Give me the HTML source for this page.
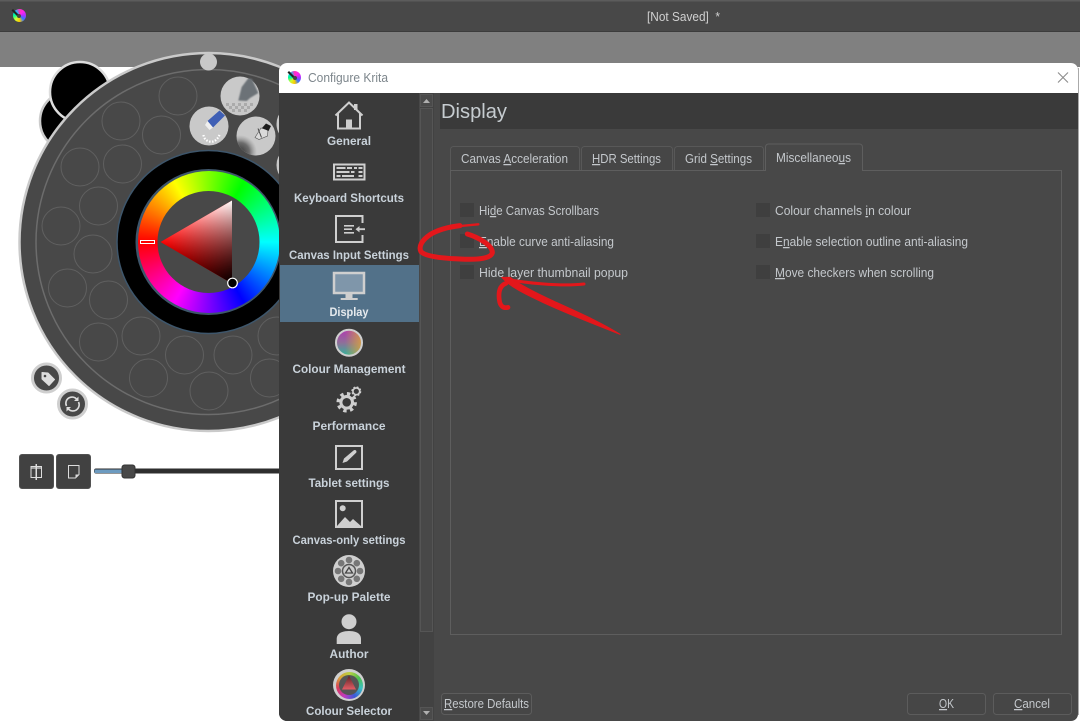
<!DOCTYPE html>
<html><head><meta charset="utf-8"><style>
html,body{margin:0;padding:0;width:1080px;height:724px;overflow:hidden;background:#fff}
.l{position:absolute;left:0;top:0}
.c{position:absolute;border-radius:50%}
text{font-family:"Liberation Sans",sans-serif;font-size:12.5px}
.n text{font-weight:bold;fill:#c9d2da;font-size:12px;text-anchor:middle}
.t text{fill:#c4c8cc}
.u{text-decoration:underline}
</style></head><body>
<svg class="l" width="1080" height="724" viewBox="0 0 1080 724">
<defs>
<radialGradient id="sm" gradientUnits="userSpaceOnUse" cx="240" cy="152" r="17"><stop offset="0" stop-color="#333"/><stop offset=".55" stop-color="#555" stop-opacity=".8"/><stop offset="1" stop-color="#888" stop-opacity="0"/></radialGradient>
<filter id="bl"><feGaussianBlur stdDeviation=".8"/></filter>
<clipPath id="pc"><circle cx="256" cy="136" r="19.500"/></clipPath>
</defs>
<rect width="1080" height="724" fill="#fff"/>
<rect width="1080" height="67" fill="#808080"/>
<rect width="1080" height="32" fill="#484848"/>
<rect width="1080" height="1.5" fill="#5c5c5c"/>
<rect y="31" width="1080" height="1" fill="#3c3c3c"/>
<text x="647" y="21" fill="#d0d0d0" textLength="73" lengthAdjust="spacingAndGlyphs" xml:space="preserve">[Not Saved]  *</text>
<circle cx="70" cy="121" r="30" fill="#000" stroke="#ccc" stroke-width="2.5"/>
<circle cx="80" cy="92" r="30" fill="#000" stroke="#ddd" stroke-width="2.5"/>
<circle cx="208.500" cy="242" r="189" fill="#484848" stroke="#cacaca" stroke-width="2.500"/>
<circle cx="208.500" cy="242" r="172.500" fill="none" stroke="#6c6c6c" stroke-width="1.500"/>
<circle cx="208.500" cy="62" r="8.500" fill="#c8c8c8"/>
<g fill="none" stroke="#606060" stroke-width="1">
<circle cx="178" cy="96" r="19"/><circle cx="121" cy="121" r="19"/><circle cx="161.500" cy="135" r="19"/><circle cx="80" cy="167" r="19"/><circle cx="122.500" cy="164" r="19"/><circle cx="98.500" cy="206" r="19"/><circle cx="61" cy="226" r="19"/><circle cx="93" cy="254" r="19"/><circle cx="67.500" cy="288" r="19"/><circle cx="108.500" cy="300" r="19"/><circle cx="98.500" cy="342" r="19"/><circle cx="141" cy="336" r="19"/><circle cx="148.500" cy="378" r="19"/><circle cx="184.500" cy="355" r="19"/><circle cx="209" cy="391" r="19"/><circle cx="233" cy="355" r="19"/><circle cx="269.500" cy="378" r="19"/><circle cx="277" cy="336" r="19"/>
</g>
<g fill="#c9c9c9">
<circle cx="240" cy="96" r="19.500"/><circle cx="209" cy="126" r="19.500"/><circle cx="256" cy="136" r="19.500"/><circle cx="296" cy="124" r="19.500"/><circle cx="296" cy="165" r="19.500"/>
</g>
<!-- smudge brush -->
<path d="M238.300 100.500L241.700 87 248.300 78.300 252 79 258.300 93 250 98 246.700 101z" fill="#6c7277" filter="url(#bl)"/>
<g fill="#ababab"><rect x="226" y="103" width="3" height="3"/><rect x="232" y="103" width="3" height="3"/><rect x="238" y="103" width="3" height="3"/><rect x="244" y="103" width="3" height="3"/><rect x="250" y="103" width="3" height="3"/><rect x="229" y="106" width="3" height="3"/><rect x="235" y="106" width="3" height="3"/><rect x="241" y="106" width="3" height="3"/><rect x="247" y="106" width="3" height="3"/><rect x="232" y="109" width="3" height="3"/><rect x="238" y="109" width="3" height="3"/><rect x="244" y="109" width="3" height="3"/></g>
<!-- eraser -->
<path d="M207.500 121L219.500 110.500 225 115.500 213 127.500z" fill="#3f5fb5"/>
<path d="M205 125L207.500 121 213 127.500 209.500 130z" fill="#efefef"/>
<path d="M203.500 135C204 140 209 142.500 213 141.500 216 141 219 137 220 133.500" fill="none" stroke="#fff" stroke-width="2.200" stroke-dasharray="1.500 1.500"/>
<!-- pen brush -->
<g clip-path="url(#pc)"><circle cx="240" cy="152" r="17" fill="url(#sm)"/></g>
<path d="M255 137.500L261 128 268 130 267.500 136 259 139.500z" fill="#dadada" stroke="#555" stroke-width=".6"/>
<path d="M262 128L266 123.500 271 126 268.500 131z" fill="#1c1c1c"/>
<path d="M258 128.500l3.500 9" stroke="#444" stroke-width="1"/>
<!-- wheel black -->
<circle cx="208.500" cy="242" r="91.500" fill="#000" stroke="#3e566b" stroke-width="1.500"/>
<circle cx="208.500" cy="242" r="73" fill="#3e566b"/>
<!-- tag buttons -->
<circle cx="46.500" cy="378" r="14" fill="#484848" stroke="#cfcfcf" stroke-width="3"/>
<circle cx="72.500" cy="404" r="14" fill="#484848" stroke="#cfcfcf" stroke-width="3"/>
<path d="M42 372.500l6 .5 6.500 6.500-5.500 6-7-6.500z" fill="#ddd" stroke="#ddd" stroke-linejoin="round"/>
<circle cx="45" cy="376" r="1.300" fill="#484848"/>
<path d="M66.500 406a6.200 6.200 0 0 1 10.500-6.500M78.500 402a6.200 6.200 0 0 1-10.500 6.500" fill="none" stroke="#ddd" stroke-width="1.600"/>
<path d="M78.500 396.500v4.500h-4.500zM66.500 411.500v-4.500h4.500z" fill="#ddd"/>
<!-- toolbar buttons -->
<rect x="19.500" y="454.500" width="34" height="34" rx="2.500" fill="#414141" stroke="#525252"/>
<rect x="56.500" y="454.500" width="34" height="34" rx="2.500" fill="#414141" stroke="#525252"/>
<path d="M31 466.500h5v11h-5zM36.500 466.500h5v11h-5z" fill="none" stroke="#ddd"/>
<rect x="31" y="466.500" width="10.500" height="2.500" fill="#ddd" opacity=".6"/>
<rect x="35.500" y="464" width="1.500" height="16" fill="#ddd"/>
<path d="M68.500 465.500h10.500v9l-3.500 3.500h-7z" fill="none" stroke="#ddd"/>
<path d="M75.500 478v-3.500h3.500z" fill="#ddd"/>
<rect x="94" y="468.500" width="190" height="5" rx="2" fill="#2e2e2e"/>
<rect x="94.500" y="469.500" width="30" height="3.500" fill="#6d9bc0"/>
<rect x="122" y="465" width="13" height="13" rx="2.500" fill="#484848" stroke="#333"/>
</svg>
<div class="c" style="left:137.500px;top:171px;width:142px;height:142px;background:conic-gradient(from 270deg,#f00,#ff0,#0f0,#0ff,#00f,#f0f,#f00)"></div>
<svg class="l" width="1080" height="724" viewBox="0 0 1080 724">
<defs>
<linearGradient id="g2" gradientUnits="userSpaceOnUse" x1="232" y1="200.500" x2="196" y2="263"><stop offset="0" stop-color="#fff"/><stop offset="1" stop-color="#fff" stop-opacity="0"/></linearGradient>
<linearGradient id="g3" gradientUnits="userSpaceOnUse" x1="232" y1="283.500" x2="196" y2="221"><stop offset="0" stop-color="#000"/><stop offset="1" stop-color="#000" stop-opacity="0"/></linearGradient>
<linearGradient id="cm" x1="0" y1="0" x2="0" y2="1"><stop offset="0" stop-color="#b13bb0"/><stop offset=".5" stop-color="#8f6f9a"/><stop offset="1" stop-color="#2fb59a"/></linearGradient>
<linearGradient id="cm2" x1="0" y1="0" x2="1" y2="0"><stop offset=".35" stop-color="#d8a040" stop-opacity="0"/><stop offset="1" stop-color="#d8a040" stop-opacity=".9"/></linearGradient>
<linearGradient id="ct" x1="0" y1="0" x2="0" y2="1"><stop offset="0" stop-color="#5a2424"/><stop offset="1" stop-color="#e55d66"/></linearGradient>
</defs>
<circle cx="208.500" cy="242" r="51" fill="#484848"/>
<path d="M160.500 242L232 200.500V283.500z" fill="#f00"/>
<path d="M160.500 242L232 200.500V283.500z" fill="url(#g2)"/>
<path d="M160.500 242L232 200.500V283.500z" fill="url(#g3)"/>
<rect x="140.500" y="240.500" width="14" height="3" fill="#f00" stroke="#fff"/>
<circle cx="232.500" cy="283" r="4.800" fill="#000" stroke="#fff" stroke-width="1.200"/>

<!-- dialog -->
<path d="M279 71a8 8 0 0 1 8-8h784a7 7 0 0 1 7 7v644a7 7 0 0 1-7 7H287a8 8 0 0 1-8-8z" fill="#484848"/>
<path d="M279 93V71a8 8 0 0 1 8-8h784a7 7 0 0 1 7 7v23z" fill="#fff"/>
<path d="M1078.500 68v647" stroke="#aaa" stroke-width="1"/>
<text x="308" y="82" fill="#7d868c" textLength="80" lengthAdjust="spacingAndGlyphs">Configure Krita</text>
<path d="M1058 72.500l10 10M1068 72.500l-10 10" stroke="#8c8c8c" stroke-width="1.100"/>
<path d="M279 93h141v628H287a8 8 0 0 1-8-8z" fill="#3a3a3a"/>
<rect x="280" y="265" width="139" height="57" fill="#527189"/>
<rect x="419" y="93" width="1" height="628" fill="#484848"/>
<!-- scrollbar -->
<rect x="420" y="93" width="14" height="628" fill="#424242"/>
<rect x="420.500" y="94.500" width="12" height="12" fill="#4a4a4a" stroke="#555"/>
<path d="M423 103l3.500-4 3.500 4z" fill="#b0b0b0"/>
<rect x="420.500" y="108.500" width="12" height="523" fill="#484848" stroke="#555"/>
<rect x="420.500" y="707.500" width="12" height="12" fill="#4a4a4a" stroke="#555"/>
<path d="M423 711l3.500 4 3.500-4z" fill="#b0b0b0"/>
<!-- header -->
<rect x="440" y="93" width="638" height="36" fill="#3a3a3a"/>
<text x="441" y="118" fill="#c6ccd0" style="font-size:20px" textLength="66" lengthAdjust="spacingAndGlyphs">Display</text>
<!-- tabs -->
<path d="M450.500 170.500v-21a3 3 0 0 1 3-3h123a3 3 0 0 1 3 3v21M581.500 170.500v-21a3 3 0 0 1 3-3h85a3 3 0 0 1 3 3v21M674.500 170.500v-21a3 3 0 0 1 3-3h83a3 3 0 0 1 3 3v21" fill="#464646" stroke="#585858"/>
<rect x="450.500" y="170.500" width="611" height="464" fill="#484848" stroke="#5e5e5e"/>
<path d="M765.500 171v-24a3 3 0 0 1 3-3h91a3 3 0 0 1 3 3v24" fill="#484848" stroke="#5e5e5e"/>
<rect x="766" y="169" width="96" height="3" fill="#484848"/>
<g class="t">
<text x="461" y="163" textLength="107" lengthAdjust="spacingAndGlyphs">Canvas <tspan class="u">A</tspan>cceleration</text>
<text x="592" y="163" textLength="69" lengthAdjust="spacingAndGlyphs"><tspan class="u">H</tspan>DR Settings</text>
<text x="685" y="163" textLength="67" lengthAdjust="spacingAndGlyphs">Grid <tspan class="u">S</tspan>ettings</text>
<text x="776" y="162" textLength="75" lengthAdjust="spacingAndGlyphs">Miscellaneo<tspan class="u">u</tspan>s</text>
<text x="479" y="215" textLength="120" lengthAdjust="spacingAndGlyphs">Hi<tspan class="u">d</tspan>e Canvas Scrollbars</text>
<text x="479" y="246" textLength="135" lengthAdjust="spacingAndGlyphs"><tspan class="u">E</tspan>nable curve anti-aliasing</text>
<text x="479" y="277" textLength="149" lengthAdjust="spacingAndGlyphs">Hide layer thumbnail popup</text>
<text x="775" y="215" textLength="136" lengthAdjust="spacingAndGlyphs">Colour channels <tspan class="u">i</tspan>n colour</text>
<text x="775" y="246" textLength="193" lengthAdjust="spacingAndGlyphs">E<tspan class="u">n</tspan>able selection outline anti-aliasing</text>
<text x="775" y="277" textLength="159" lengthAdjust="spacingAndGlyphs"><tspan class="u">M</tspan>ove checkers when scrolling</text>
</g>
<g fill="#3f3f3f">
<rect x="460" y="203" width="14" height="14"/><rect x="460" y="234" width="14" height="14"/><rect x="460" y="265" width="14" height="14"/>
<rect x="756" y="203" width="14" height="14"/><rect x="756" y="234" width="14" height="14"/><rect x="756" y="265" width="14" height="14"/>
</g>
<!-- buttons -->
<g fill="#464646" stroke="#5c5c5c">
<rect x="441.500" y="693.500" width="90" height="21" rx="3"/>
<rect x="907.500" y="693.500" width="78" height="21" rx="3"/>
<rect x="993.500" y="693.500" width="78" height="21" rx="3"/>
</g>
<g class="t">
<text x="444" y="708" textLength="85" lengthAdjust="spacingAndGlyphs"><tspan class="u">R</tspan>estore Defaults</text>
<text x="939" y="708" textLength="15" lengthAdjust="spacingAndGlyphs"><tspan class="u">O</tspan>K</text>
<text x="1014" y="708" textLength="36" lengthAdjust="spacingAndGlyphs"><tspan class="u">C</tspan>ancel</text>
</g>
<!-- sidebar labels -->
<g class="n">
<text x="349" y="145" textLength="44" lengthAdjust="spacingAndGlyphs">General</text>
<text x="349" y="202" textLength="110" lengthAdjust="spacingAndGlyphs">Keyboard Shortcuts</text>
<text x="349" y="259" textLength="120" lengthAdjust="spacingAndGlyphs">Canvas Input Settings</text>
<text x="349" y="316" textLength="39" lengthAdjust="spacingAndGlyphs" style="fill:#e6eaee">Display</text>
<text x="349" y="373" textLength="113" lengthAdjust="spacingAndGlyphs">Colour Management</text>
<text x="349" y="430" textLength="73" lengthAdjust="spacingAndGlyphs">Performance</text>
<text x="349" y="487" textLength="81" lengthAdjust="spacingAndGlyphs">Tablet settings</text>
<text x="349" y="544" textLength="113" lengthAdjust="spacingAndGlyphs">Canvas-only settings</text>
<text x="349" y="601" textLength="83" lengthAdjust="spacingAndGlyphs">Pop-up Palette</text>
<text x="349" y="658" textLength="39" lengthAdjust="spacingAndGlyphs">Author</text>
<text x="349" y="715" textLength="86" lengthAdjust="spacingAndGlyphs">Colour Selector</text>
</g>
<!-- sidebar icons -->
<circle cx="349" cy="342.700" r="13" fill="url(#cm)"/>
<circle cx="349" cy="342.700" r="13" fill="url(#cm2)"/>
<g fill="none" stroke="#cfcfcf" stroke-width="2">
<path d="M335.500 115.500L349 102.500l13.500 13M338 113v15.500h22V113"/>
<path d="M338.500 128.500h21" />
<path d="M334 164.500h30.500v15h-30.500z"/>
<path d="M362.500 223v-7h-26.500v26h26.500v-7"/>
<rect x="334" y="273" width="30" height="20" fill="#7f96aa" stroke-width="2.500"/>
<circle cx="349" cy="342.700" r="13"/>
<rect x="336" y="446" width="26" height="23"/>
<rect x="336" y="501" width="26" height="26"/>
<circle cx="356.300" cy="391.300" r="3.400" stroke-width="1.600"/>
<circle cx="356.300" cy="391.300" r="4.400" stroke-width="1.200" stroke-dasharray="2 1.500"/>
</g>
<g fill="#cfcfcf">
<rect x="346" y="119.500" width="6" height="9"/><rect x="354" y="104" width="3.500" height="6"/>
<path d="M336.500 167h9v2h-9zM347 167h5v2h-5zM354 167h3v2h-3zM358.500 167h4v2h-4zM336.500 171h13v2h-13zM351 171h3.500v2h-3.500zM358.500 171h4v2h-4zM336.500 175h4v2h-4zM342 175h12v2h-12zM358.500 175h4v2h-4z"/>
<path d="M344 225h10v1.600h-10zM344 228.400h8v1.600h-8zM344 232h10v1.600h-10z"/>
<path d="M365 228.300h-5.500v-2.300l-4 3.200 4 3.200v-2.300h5.500z"/>
<rect x="345.500" y="294" width="7" height="4"/><rect x="340.700" y="298" width="17" height="2"/>
<path d="M342.500 463l1.500-4.500 9.500-8c1-.8 2-.5 2.500 0s.8 1.600 0 2.400l-9 8.600z"/>
<circle cx="342.700" cy="508.300" r="3"/>
<path d="M337 526l8-9 5 5 3-3 8 7z"/>
<circle cx="349" cy="571" r="16"/>
<circle cx="349" cy="621.700" r="7.500"/>
<path d="M336.700 644v-5c0-6 6-8 12.300-8s12 2 12 8v5z"/>
<circle cx="349" cy="685" r="16"/>
</g>
<circle cx="346.700" cy="402.300" r="8.500" fill="none" stroke="#cfcfcf" stroke-width="3.500" stroke-dasharray="3.300 3.370"/>
<circle cx="346.700" cy="402.300" r="5.800" fill="none" stroke="#cfcfcf" stroke-width="3"/>
<g fill="#777">
<circle cx="349" cy="560" r="3.300"/><circle cx="356.800" cy="563.200" r="3.300"/><circle cx="360" cy="571" r="3.300"/><circle cx="356.800" cy="578.800" r="3.300"/><circle cx="349" cy="582" r="3.300"/><circle cx="341.200" cy="578.800" r="3.300"/><circle cx="338" cy="571" r="3.300"/><circle cx="341.200" cy="563.200" r="3.300"/>
</g>
<circle cx="349" cy="571" r="6.500" fill="#ccc" stroke="#555" stroke-width="1.500"/>
<path d="M349 567.500l3.500 5.500h-7z" fill="none" stroke="#444" stroke-width="1.300"/>
<!-- red annotations -->
<g transform="translate(410 130) scale(.33333)" fill="none" stroke="#e3171b" stroke-linecap="round" stroke-linejoin="round">
<path d="M150 287C115 291 85 299 60 314 35 331 25 350 33 365 46 380 100 385 150 387 200 390 243 386 247 368 248 346 205 322 172 312" stroke-width="15"/>
<path d="M205 283L120 291" stroke-width="7"/>
<path d="M285 447C340 458 450 470 522 462" stroke-width="9"/>
<path d="M288 460C272 466 264 482 268 510 270 528 280 536 294 532" stroke-width="14"/>
<path d="M275 442C300 470 340 490 400 518 480 555 560 585 630 613 570 575 500 545 430 513 380 490 330 465 300 442Z" fill="#e3171b" stroke-width="3"/>
</g>
</svg>
<!-- Krita logos -->
<div class="c" style="left:12.500px;top:8.500px;width:13px;height:13px;background:conic-gradient(from 0deg,#f3b,#f2e,#a3f,#37f,#fc0,#cf3,#0f9,#0cf,#f3b)"></div>
<div class="c" style="left:288px;top:71px;width:13px;height:13px;background:conic-gradient(from 0deg,#f3b,#f2e,#a3f,#37f,#fc0,#cf3,#0f9,#0cf,#f3b)"></div>
<!-- Colour selector icon -->
<div class="c" style="left:335.500px;top:671.500px;width:27px;height:27px;background:conic-gradient(from 0deg,#b8d040,#4ec04e,#3ac0c0,#3a5ad9,#c03ac0,#d93a5a,#d9a03a,#b8d040)"></div>
<div class="c" style="left:339px;top:675px;width:20px;height:20px;background:#555"></div>
<svg class="l" width="1080" height="724" viewBox="0 0 1080 724" style="pointer-events:none">
<path d="M13 9l6.500 6.500-1.500 1.500-6.500-6.500z" fill="#222"/>
<circle cx="19" cy="16" r="2" fill="#444"/>
<path d="M289 71l6.500 6.500-1.500 1.500-6.500-6.500z" fill="#222"/>
<circle cx="295" cy="78" r="2" fill="#444"/>
<path d="M349 675.500l7 14h-14z" fill="url(#ct)"/>
</svg>
</body></html>
